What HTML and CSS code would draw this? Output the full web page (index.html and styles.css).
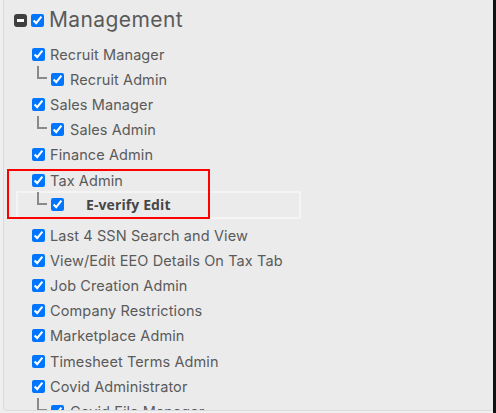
FILE: index.html
```html
<!DOCTYPE html>
<html>
<head>
<meta charset="utf-8">
<link rel="stylesheet" href="styles.css">
</head>
<body>
<div class="frame">
  <div class="panel">
    <div class="root">
      <span class="toggle"></span>
      <input type="checkbox" class="cb" checked>
      <span class="root-label">Management</span>
    </div>
    <ul class="tree">
      <li class="row"><input type="checkbox" class="cb" checked><span class="label">Recruit Manager</span></li>
      <li class="row child"><span class="elbow"></span><input type="checkbox" class="cb" checked><span class="label">Recruit Admin</span></li>
      <li class="row"><input type="checkbox" class="cb" checked><span class="label">Sales Manager</span></li>
      <li class="row child"><span class="elbow"></span><input type="checkbox" class="cb" checked><span class="label">Sales Admin</span></li>
      <li class="row"><input type="checkbox" class="cb" checked><span class="label">Finance Admin</span></li>
      <li class="row"><input type="checkbox" class="cb" checked><span class="label">Tax Admin</span></li>
      <li class="row child selected"><span class="elbow"></span><input type="checkbox" class="cb" checked><span class="label strong">E-verify Edit</span></li>
      <li class="row"><input type="checkbox" class="cb" checked><span class="label">Last 4 SSN Search and View</span></li>
      <li class="row"><input type="checkbox" class="cb" checked><span class="label">View/Edit EEO Details On Tax Tab</span></li>
      <li class="row"><input type="checkbox" class="cb" checked><span class="label">Job Creation Admin</span></li>
      <li class="row"><input type="checkbox" class="cb" checked><span class="label">Company Restrictions</span></li>
      <li class="row"><input type="checkbox" class="cb" checked><span class="label">Marketplace Admin</span></li>
      <li class="row"><input type="checkbox" class="cb" checked><span class="label">Timesheet Terms Admin</span></li>
      <li class="row"><input type="checkbox" class="cb" checked><span class="label">Covid Administrator</span></li>
      <li class="row child"><span class="elbow"></span><input type="checkbox" class="cb" checked><span class="label">Covid File Manager</span></li>
    </ul>
    <div class="highlight"></div>
  </div>
  <div class="edge"></div>
</div>
</body>
</html>
```

FILE: styles.css
```css
html, body {
  margin: 0;
  padding: 0;
  background: #efefef;
}
.frame {
  display: flex;
  width: 496px;
  height: 413px;
  overflow: hidden;
}
.panel {
  position: relative;
  flex: 1;
  height: 411px;
  margin-left: 3px;
  box-sizing: border-box;
  border-left: 1px solid #dadada;
  border-bottom: 1px solid #dcdcdc;
  border-bottom-left-radius: 4px;
  background: #ebebeb;
  overflow: hidden;
  font-family: "Inter", "Open Sans", sans-serif;
  color: #5a5a5a;
}
.edge {
  width: 3px;
  background: #111;
}
.root {
  display: flex;
  align-items: center;
  height: 26px;
  padding: 7px 0 0 10px;
}
.toggle {
  position: relative;
  width: 13px;
  height: 13px;
  border-radius: 3px;
  background: #3f3f3f;
  margin-right: 4px;
}
.toggle::after {
  content: "";
  position: absolute;
  left: 3px;
  right: 3px;
  top: 5px;
  height: 3px;
  background: #fff;
}
.cb {
  width: 13px;
  height: 13px;
  margin: 0;
  accent-color: #0075ff;
  flex: none;
}
.root-label {
  font-size: 21px;
  letter-spacing: 0.4px;
  margin-left: 5px;
  line-height: 26px;
}
.tree {
  list-style: none;
  margin: 0;
  padding: 8.5px 0 0 28px;
}
.row {
  display: flex;
  align-items: center;
  height: 25.2px;
}
.label {
  font-size: 14.5px;
  letter-spacing: 0.1px;
  margin-left: 5px;
  white-space: nowrap;
}
.child {
  padding-left: 5px;
}
.elbow {
  align-self: flex-start;
  width: 8px;
  height: 11px;
  border-left: 2px solid #8a8a8a;
  border-bottom: 2px solid #8a8a8a;
  margin-right: 4px;
  margin-top: -1px;
  flex: none;
}
.child .label {
  margin-left: 6px;
}
.selected {
  height: 24px;
  margin: -2px 192px 4px -16px;
  padding-left: 19px;
  border: 2px solid #f4f4f4;
}
.selected .elbow {
  margin-top: -1px;
}
.child .strong {
  font-family: "Open Sans", sans-serif;
  font-weight: 700;
  font-size: 14px;
  color: #474747;
  margin-left: 22px;
}
.highlight {
  position: absolute;
  left: 3px;
  top: 169px;
  width: 199px;
  height: 46px;
  border: 2px solid #ff0000;
}
```
